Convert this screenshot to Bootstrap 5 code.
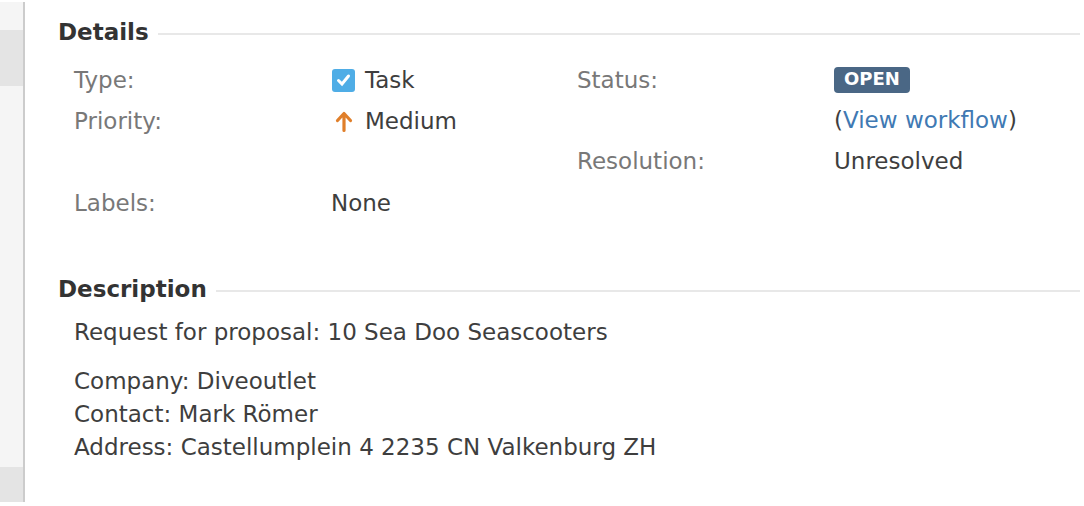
<!DOCTYPE html>
<html lang="en">
<head>
<meta charset="utf-8">
<meta name="viewport" content="width=device-width, initial-scale=1">
<title>Issue details</title>
<link href="https://cdn.jsdelivr.net/npm/bootstrap@5.3.0/dist/css/bootstrap.min.css" rel="stylesheet">
<style>
body{font-family:"DejaVu Sans",sans-serif;font-size:23px;line-height:33px;color:#3e3e3e;background:#fff}
.issue-page{padding:2px 4px 4px 0;min-height:100vh}
.side-rail{width:25px;background:#f5f5f5;border-right:2px solid #ccc}
.rail-top{height:56px;margin-top:28px;background:#e4e4e4}
.rail-bottom{height:35px;background:#e4e4e4}
.issue-main{padding:14px 0 0 33px}
.section-head,.icon-value{gap:9px}
.section-title{font-size:23px;line-height:32px;font-weight:700;margin:0;color:#333}
.section-rule{height:2px;background:#e8e8e8;margin-top:4px}
.fields{margin:12px 0 0 16px}
.field-col{width:503px}
.field-name{width:257px;color:#787878;font-weight:400;flex:none}
.field-row{padding:4px 0}
.field-value{margin:0}
.labels-row{margin-top:41px}
.status-line{height:31px;margin-bottom:9px}
.status-badge{font-size:18px;line-height:24px;padding:0 10px 2px;background:#4a6785;border-radius:4px;color:#fff;font-weight:700}
.flow-link{color:#4079b3;text-decoration:none}
.description{padding-top:49px}
.desc-body{margin:11px 0 0 16px}
</style>
</head>
<body>
<div class="issue-page d-flex">
  <aside class="side-rail d-flex flex-column justify-content-between flex-shrink-0">
    <div class="rail-top"></div><div class="rail-bottom"></div>
  </aside>
  <main class="issue-main flex-grow-1">
    <section>
      <div class="section-head d-flex align-items-center"><h2 class="section-title">Details</h2><div class="section-rule flex-grow-1"></div></div>
      <div class="fields d-flex">
        <dl class="field-col mb-0">
          <div class="field-row d-flex"><dt class="field-name">Type:</dt><dd class="field-value icon-value d-flex align-items-center">
            <svg width="25" height="25" viewBox="0 0 25 25" aria-hidden="true"><rect x="1" y="1" width="23" height="23" rx="3" fill="#4fade6"/><path d="M7.5 12.5l3.5 3.5 6.5-8" fill="none" stroke="#fff" stroke-width="3" stroke-linecap="round"/></svg>Task</dd></div>
          <div class="field-row d-flex"><dt class="field-name">Priority:</dt><dd class="field-value icon-value d-flex align-items-center">
            <svg width="25" height="25" viewBox="0 0 25 25" aria-hidden="true"><path d="M13 21.500V4.500M6.500 11.500l6.500-7 6.500 7" fill="none" stroke="#e07f2a" stroke-width="3.200" stroke-linecap="round" stroke-linejoin="round"/></svg>Medium</dd></div>
          <div class="field-row labels-row d-flex"><dt class="field-name">Labels:</dt><dd class="field-value">None</dd></div>
        </dl>
        <dl class="mb-0">
          <div class="field-row d-flex"><dt class="field-name">Status:</dt><dd class="field-value"><div class="status-line d-flex align-items-center"><span class="status-badge">OPEN</span></div>(<a class="flow-link" href="#">View workflow</a>)</dd></div>
          <div class="field-row d-flex"><dt class="field-name">Resolution:</dt><dd class="field-value">Unresolved</dd></div>
        </dl>
      </div>
    </section>
    <section class="description">
      <div class="section-head d-flex align-items-center"><h2 class="section-title">Description</h2><div class="section-rule flex-grow-1"></div></div>
      <div class="desc-body"><p>Request for proposal: 10 Sea Doo Seascooters</p><p class="mb-0">Company: Diveoutlet<br>Contact: Mark Römer<br>Address: Castellumplein 4 2235 CN Valkenburg ZH</p></div>
    </section>
  </main>
</div>
<script src="https://cdn.jsdelivr.net/npm/bootstrap@5.3.0/dist/js/bootstrap.bundle.min.js"></script>
</body>
</html>
